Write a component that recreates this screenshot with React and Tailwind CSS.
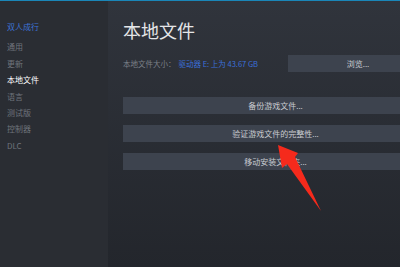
const font = { fontFamily: '"Noto Sans CJK SC", "Noto Sans", sans-serif' };

const navItems = ["通用", "更新", "本地文件", "语言", "测试版", "控制器", "DLC"];

function ActionButton({ children, className = "" }) {
  return (
    <div
      className={`flex h-[17px] items-center justify-center bg-[#3d434e] text-[8px] text-[#c9ccd1] ${className}`}
    >
      {children}
    </div>
  );
}

export default function App() {
  return (
    <div
      className="relative flex h-[267px] w-[400px] overflow-hidden border-t-[1px] border-[#1a86b8] bg-[#2a2d33]"
      style={font}
    >
      {/* sidebar */}
      <div className="w-[108px] shrink-0 bg-[#2a2d33] pl-[7px] pt-[18px]">
        <p className="text-[8px] leading-[16.4px] text-[#3d73d6]">双人成行</p>
        <div className="mt-[4px]">
          {navItems.map((item) => (
            <p
              key={item}
              className={`text-[8px] leading-[16.4px] ${
                item === "本地文件" ? "text-white" : "text-[#6f747c]"
              }`}
            >
              {item}
            </p>
          ))}
        </div>
      </div>

      {/* main */}
      <div className="w-[330px] shrink-0 bg-gradient-to-b from-[#30343c] to-[#23262c] pl-[15px] pt-[19px]">
        <div className="w-[305px]">
          <h1 className="text-[18px] leading-[20px] text-[#e4e5e7]">本地文件</h1>

          <div className="mt-[15px] flex h-[17px] items-center">
            <span className="text-[7.5px] text-[#7b8088]">本地文件大小：</span>
            <span className="ml-[3px] text-[7.5px] text-[#3b6fd9]">驱动器 E: 上为 43.67 GB</span>
            <ActionButton className="ml-auto w-[140px]">浏览...</ActionButton>
          </div>

          <div className="mt-[25px] flex flex-col gap-[11px]">
            <ActionButton>备份游戏文件...</ActionButton>
            <ActionButton>验证游戏文件的完整性...</ActionButton>
            <ActionButton>移动安装文件夹...</ActionButton>
          </div>
        </div>
      </div>

      {/* red pointer */}
      <svg
        className="pointer-events-none absolute left-0 top-0"
        width="400"
        height="267"
        viewBox="0 0 400 267"
      >
        <polygon
          points="278,144 298,152 295,156 321,210 287,163 282,167"
          fill="#f52a1c"
        />
      </svg>
    </div>
  );
}
